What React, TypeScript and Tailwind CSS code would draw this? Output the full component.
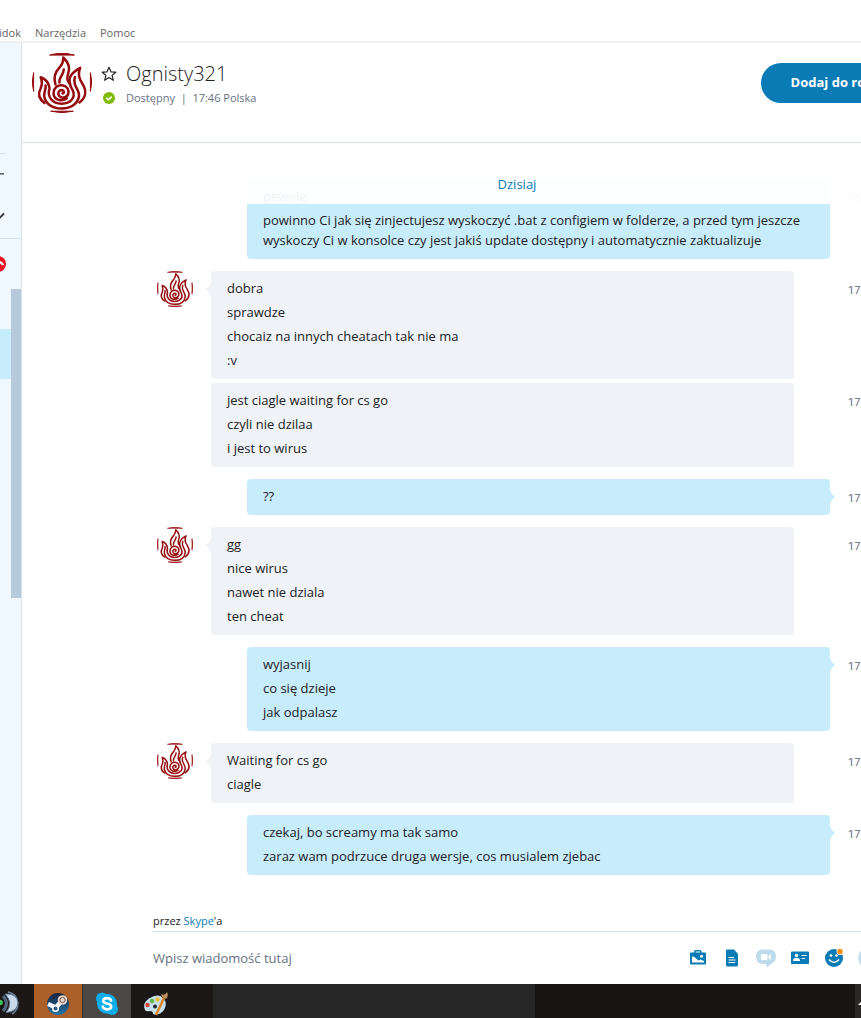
import type { ReactNode } from "react";

type Group = {
  mine?: boolean;
  avatar?: boolean;
  tail?: boolean;
  tight?: boolean;
  time: string;
  lines: string[];
};

const groups: Group[] = [
  {
    mine: true,
    time: "16:58",
    lines: [
      "pewnie",
      "powinno Ci jak się zinjectujesz wyskoczyć .bat z configiem w folderze, a przed tym jeszcze wyskoczy Ci w konsolce czy jest jakiś update dostępny i automatycznie zaktualizuje",
    ],
  },
  { avatar: true, tail: true, time: "17:40", lines: ["dobra", "sprawdze", "chocaiz na innych cheatach tak nie ma", ":v"] },
  { tight: true, time: "17:41", lines: ["jest ciagle waiting for cs go", "czyli nie dzilaa", "i jest to wirus"] },
  { mine: true, tail: true, time: "17:42", lines: ["??"] },
  { avatar: true, tail: true, time: "17:43", lines: ["gg", "nice wirus", "nawet nie dziala", "ten cheat"] },
  { mine: true, tail: true, time: "17:44", lines: ["wyjasnij", "co się dzieje", "jak odpalasz"] },
  { avatar: true, tail: true, time: "17:45", lines: ["Waiting for cs go", "ciagle"] },
  {
    mine: true,
    tail: true,
    time: "17:46",
    lines: ["czekaj, bo screamy ma tak samo", "zaraz wam podrzuce druga wersje, cos musialem zjebac"],
  },
];

function FlameAvatar({ className }: { className: string }) {
  return (
    <svg viewBox="0 0 60 60" className={className} fill="none" stroke="#950b0e" strokeWidth="2.5" strokeLinecap="round" strokeLinejoin="round">
      <path d="M18 2Q30 -1.5 42 2ZM19 58.3Q30 61 41 58.3ZM1.500 20Q-.8 29 1.500 38ZM58.500 20Q60.800 29 58.500 38Z" fill="#950b0e" strokeWidth="1" />
      <path d="M12.500 50C6.500 45.500 6.200 40 8.600 35.500C10.300 31.500 10.300 28 8.700 24.200C13.800 26 16.500 29.500 17.300 34" />
      <path d="M23.500 31.500C21.500 25 22.800 19.500 27 15.200C30 12 31.400 8.500 31.300 4.500C36.500 9.500 38.300 15.200 36.200 20.500C34.500 25 35 28 38 31" />
      <path d="M38 31C36 23.500 40.500 19.200 48.200 14.800C45.500 21 47 26 50.500 31C54.800 37.500 54 44.500 47.500 49.500" />
      <path d="M27.500 29.500C26.500 24.500 31.500 22.500 31.800 16.500" />
      <path d="M13.500 32.500C14.500 36 11.500 38.500 12.300 43.500C13.800 51.500 21 55.500 29.700 55.500C39.500 55.500 46 50.500 47 43C47.600 38 43.800 35 42.800 31C42 28 42.200 25.700 43 24" />
      <path d="M17.500 35.500C14.800 44 20.400 50.700 29.700 50.700C38.800 50.700 43.500 44.500 41 38C40 35 38.500 34.500 38 31" />
      <path d="M34.800 45.500C28 49.500 21 46 21.600 39.500C22.100 34.500 26 31.700 30.200 32.200C35 32.800 37.600 37 36.200 41C34.800 45 29.500 45.800 27.100 42.800C25.200 40 27 37.100 29.800 37.100C32.300 37.300 32.500 40 30.500 40.500" />
    </svg>
  );
}

function Tail({ mine }: { mine?: boolean }) {
  return mine ? (
    <svg viewBox="0 0 5 14" className="absolute left-full top-[11px] h-3.5 w-[5px]">
      <path d="M0 0Q1 4 5 7Q1 10 0 14Z" fill="#c7ecfc" />
    </svg>
  ) : (
    <svg viewBox="0 0 5 14" className="absolute right-full top-[11px] h-3.5 w-[5px]">
      <path d="M5 0Q4 4 0 7Q4 10 5 14Z" fill="#eff2f7" />
    </svg>
  );
}

function MessageGroup({ mine, avatar, tail, tight, time, lines }: Group) {
  return (
    <li className={`flex ${tight ? "mt-1" : "mt-3 first:mt-0"}`}>
      <div className={`shrink-0 pl-1 ${mine ? "w-[94px]" : "w-[58px]"}`}>
        {avatar && <FlameAvatar className="size-9" />}
      </div>
      <div className={`relative flex-1 rounded px-4 pb-[7px] pt-[5px] ${mine ? "mr-[18px] bg-[#c7ecfc]" : "mr-[54px] bg-[#eff2f7]"}`}>
        {tail && <Tail mine={mine} />}
        {lines.map((line) => (
          <p key={line} className="py-0.5 leading-5">
            {line}
          </p>
        ))}
      </div>
      <time className="w-[33px] shrink-0 pt-2.5 font-[Roboto,sans-serif] text-[11px] leading-5 text-[#66727f]">{time}</time>
    </li>
  );
}

function ToolButton({ label, children }: { label: string; children: ReactNode }) {
  return (
    <button type="button" aria-label={label} className="flex size-5 shrink-0 items-center justify-center text-[#0a7bb5]">
      <svg viewBox="0 0 20 20" className="size-5 overflow-visible" fill="currentColor">
        {children}
      </svg>
    </button>
  );
}

function Composer() {
  return (
    <footer className="-mr-5 pb-3.5 pl-[131px]">
      <p className="text-[11px] leading-5 text-[#222]">
        przez <a href="#skype" className="text-[#0a7bb5]">Skype</a>'a
      </p>
      <div className="flex items-center gap-3.5 border-t border-[#d5e2ec] pr-[3px] pt-3.5">
        <input
          type="text"
          aria-label="Wiadomość"
          placeholder="Wpisz wiadomość tutaj"
          className="h-6 min-w-0 flex-1 outline-none placeholder:text-[#66727f]"
        />
        <ToolButton label="Wyślij zdjęcie">
          <path fillRule="evenodd" d="M3 4.500H6V3.500Q6 2 7.500 2H12Q13.500 2 13.500 3.500V4.500H17Q18 4.500 18 5.500V15.500Q18 16.500 17 16.500H3Q2 16.500 2 15.500V5.500Q2 4.500 3 4.500ZM7.500 3.500V4.500H12V3.500ZM4 8.500V14.500H16V13L12.500 11.500L10.500 12.500L7 9.500Q5.500 8 4 8.500ZM13.500 6.800A1.500 1.500 0 1 0 13.500 9.800A1.500 1.500 0 1 0 13.500 6.800Z" />
        </ToolButton>
        <ToolButton label="Wyślij plik">
          <path d="M5 1.500H12L16 6V17Q16 18.500 14.500 18.500H5.500Q4 18.500 4 17V2.500Q4 1.500 5 1.500Z" />
          <path d="M6.500 9.500H12M6.500 12H13.500M6.500 14.500H13" stroke="#fff" strokeWidth="1" />
        </ToolButton>
        <ToolButton label="Wyślij wiadomość wideo">
          <g opacity=".27">
            <path d="M6 1.500H14Q20 2.500 20 8.500Q20 14.500 14.500 16L11.500 19.500L10 16H6Q0 15 0 8.500Q0 2.500 6 1.500Z" />
          </g>
          <rect x="5" y="6" width="6.500" height="6" rx="1" fill="#fff" />
          <path d="M15 6L12.300 8.200V9.800L15 12Z" fill="#fff" />
        </ToolButton>
        <ToolButton label="Wyślij kontakt">
          <rect x="1" y="3.500" width="18" height="12.500" rx="1" />
          <circle cx="6.500" cy="7.500" r="1.700" fill="#fff" />
          <path d="M3 13Q3 10 5.500 10H7.500Q10 10 10 13Z" fill="#fff" />
          <path d="M11.500 7.500H16.500M11.500 10.500H15" stroke="#fff" strokeWidth="1.200" />
        </ToolButton>
        <ToolButton label="Emotikony">
          <circle cx="10" cy="10" r="9" />
          <circle cx="7" cy="7.500" r="1.300" fill="#fff" />
          <circle cx="12.500" cy="7.500" r="1.300" fill="#fff" />
          <path d="M5 11.500Q10 17.500 15 11.500" fill="none" stroke="#fff" strokeWidth="1.500" />
          <circle cx="16" cy="3.500" r="3.400" fill="#fff" />
          <circle cx="16" cy="3.500" r="2.700" fill="#ff8c00" />
        </ToolButton>
        <ToolButton label="Wyślij">
          <circle cx="10" cy="10" r="10" opacity=".25" />
        </ToolButton>
      </div>
    </footer>
  );
}

function Sidebar() {
  return (
    <aside className="flex w-[22px] shrink-0 flex-col border-r border-[#d5e2ec] bg-[#f0f8ff]">
      <div className="flex h-[196px] flex-col border-b border-[#d5e2ec] pt-[110px]">
        <div className="w-1.5 border-t border-[#d5e2ec]" />
        <button type="button" aria-label="Dodaj" className="mt-2.5 h-5 w-2">
          <svg viewBox="0 0 8 20" className="h-5 w-2" fill="none" stroke="#59636c" strokeWidth="1.600">
            <path d="M0 9.800H4" />
          </svg>
        </button>
        <button type="button" aria-label="Rozwiń" className="mt-5 h-5 w-2">
          <svg viewBox="0 0 8 20" className="h-5 w-2" fill="none" stroke="#333" strokeWidth="1.800">
            <path d="M-3 10.500L0 13.500L4 9.500" />
          </svg>
        </button>
      </div>
      <svg viewBox="0 0 6 16" className="mt-[17px] h-4 w-1.5" fill="none">
        <circle cx="-2" cy="8" r="8" fill="#ec1124" />
        <path d="M-5 8Q0 4 3 9" stroke="#fff" strokeWidth="2.400" />
      </svg>
      <div className="mt-[17px] flex flex-1 items-start justify-between">
        <div className="mt-10 h-[50px] w-[11px] bg-[#c7ecfc]" />
        <div className="h-[309px] w-2.5 bg-[#b6cadb]" />
      </div>
    </aside>
  );
}

function Taskbar() {
  return (
    <nav aria-label="Pasek zadań" className="flex h-[34px] shrink-0 overflow-hidden bg-[#1b1716]">
      <button type="button" aria-label="TeamSpeak" className="w-[34px] shrink-0">
        <svg viewBox="0 0 34 34" className="size-[34px]" fill="none">
          <path d="M8 8A12 12 0 0 1 12 30" stroke="#71839a" strokeWidth="1.500" />
          <path d="M5 10Q17 9 18 19Q17 28 6 28.500Q14 19 5 10Z" fill="#c9d9ec" stroke="#5f7894" />
          <path d="M3 12Q10 19 3 27" stroke="#55677f" strokeWidth="3" />
          <circle cx="0" cy="18.500" r="2.800" fill="#3fc45a" />
        </svg>
      </button>
      <button type="button" aria-label="Steam" className="flex w-[49px] shrink-0 justify-center border-r border-[#332c28] bg-[#aa6027]">
        <svg viewBox="0 0 34 34" className="size-[34px]">
          <defs>
            <linearGradient id="steam" x1="0" y1="0" x2="0" y2="1">
              <stop offset="0" stopColor="#13203c" />
              <stop offset="1" stopColor="#2675a8" />
            </linearGradient>
          </defs>
          <circle cx="17" cy="20" r="11" fill="url(#steam)" />
          <path d="M7 20L15 23.500L20.500 17" fill="none" stroke="#f2f3f5" strokeWidth="4.500" strokeLinejoin="round" />
          <circle cx="14.500" cy="24.500" r="3.500" fill="#fff" />
          <circle cx="14.500" cy="24.500" r="2" fill="#28598a" />
          <circle cx="21.500" cy="16" r="4.800" fill="#e8d6cc" />
          <circle cx="21.500" cy="16" r="2.600" fill="#e8d6cc" stroke="#755a51" />
        </svg>
      </button>
      <button type="button" aria-label="Skype" className="flex w-12 shrink-0 justify-center bg-[#4a4745]">
        <svg viewBox="0 0 34 34" className="size-[34px]">
          <circle cx="12" cy="14.500" r="6" fill="#0badea" />
          <circle cx="22" cy="25" r="6" fill="#0badea" />
          <circle cx="17" cy="19.800" r="10" fill="#0badea" />
          <path d="M21 16.500C20 13.500 13.200 13.200 13.200 16.700C13.200 20.500 21.200 18.500 21.200 22.600C21.200 26.500 13.500 26 12.800 22.500" fill="none" stroke="#fff" strokeWidth="2.700" strokeLinecap="round" />
        </svg>
      </button>
      <button type="button" aria-label="Paint" className="flex w-12 shrink-0 justify-center">
        <svg viewBox="0 0 34 34" className="size-[34px]">
          <path d="M7 26Q4 19 11 14.500Q20 9 25 14Q30 19 26 26Q21 32 15 30Q15 27 12 27Q8 28 7 26Z" fill="#c6dfea" />
          <circle cx="17" cy="22.500" r="2" fill="#1b2a3a" />
          <circle cx="9.500" cy="21" r="2.200" fill="#d9432f" />
          <circle cx="14" cy="17" r="2.200" fill="#64b548" />
          <circle cx="19.500" cy="15.500" r="2.200" fill="#e9c33c" />
          <path d="M18 31L26 14" stroke="#df8526" strokeWidth="2.500" />
          <path d="M24 13L23 10Q27 12 29 8Q31 12 28 15Z" fill="#c09057" />
        </svg>
      </button>
      <div className="ml-[34px] w-[322px] bg-[#272626]" />
      <div className="flex-1 bg-[#181413]" />
      <div className="flex w-1.5 items-center bg-[#2b2827]">
        <svg viewBox="0 0 6 20" className="h-5 w-1.5">
          <path d="M3 14L6 11V14Z" fill="#fff" />
        </svg>
      </div>
    </nav>
  );
}

export default function App() {
  return (
    <div className="flex h-screen flex-col overflow-hidden bg-white font-['Open_Sans','Noto_Sans',sans-serif] text-[13px] text-[#222]">
      <nav aria-label="Menu" className="flex h-[43px] shrink-0 items-end gap-3.5 border-b-2 border-[#efefef] text-[11px] leading-4 text-[#666]">
        <a href="#widok" className="-ml-4 w-[37px] text-right">Widok</a>
        <a href="#narzedzia">Narzędzia</a>
        <a href="#pomoc">Pomoc</a>
      </nav>

      <div className="flex min-h-0 flex-1">
        <Sidebar />
        <main className="flex min-w-0 flex-1 flex-col">
          <header className="flex h-[100px] shrink-0 items-start border-b border-[#d5e2ec] pl-2.5 pt-2.5">
            <FlameAvatar className="size-[60px] shrink-0" />
            <div className="ml-[9px] flex-1 pt-[7px]">
              <div className="flex items-center gap-[9px]">
                <svg viewBox="0 0 16 16" className="size-4" fill="none" stroke="#222" strokeWidth="1.200" strokeLinejoin="round">
                  <path d="M8 1.200L10 5.800L14.800 6.200L11.100 9.400L12.300 14.300L8 11.600L3.700 14.300L4.900 9.400L1.200 6.200L6 5.800Z" />
                </svg>
                <h1 className="text-xl font-light leading-7">Ognisty321</h1>
              </div>
              <div className="flex items-center gap-[9px] text-[11px] leading-5 text-[#66727f]">
                <svg viewBox="0 0 16 16" className="size-4" fill="none">
                  <circle cx="8" cy="8" r="6" fill="#7fba00" />
                  <path d="M5.300 7.800L7.300 9.800L10.700 6.700" stroke="#fff" strokeWidth="1.600" />
                </svg>
                <p>Dostępny&nbsp; |&nbsp; 17:46 Polska</p>
              </div>
            </div>
            <button type="button" className="-mr-20 mt-2.5 h-10 shrink-0 whitespace-nowrap rounded-full bg-[#0a7bb5] px-[30px] font-bold text-white">
              Dodaj do rozmowy
            </button>
          </header>

          <section className="relative min-h-0 flex-1 overflow-hidden">
            <ul className="-mr-5 pl-[131px] pt-9">
              {groups.map((group) => (
                <MessageGroup key={group.time} {...group} />
              ))}
            </ul>
            <h2 className="absolute -right-5 left-0 top-0 h-[61px] bg-white/95 pl-[131px] pt-[31px] text-center leading-5 text-[#0a7bb5]">
              Dzisiaj
            </h2>
          </section>

          <Composer />
        </main>
      </div>

      <Taskbar />
    </div>
  );
}
